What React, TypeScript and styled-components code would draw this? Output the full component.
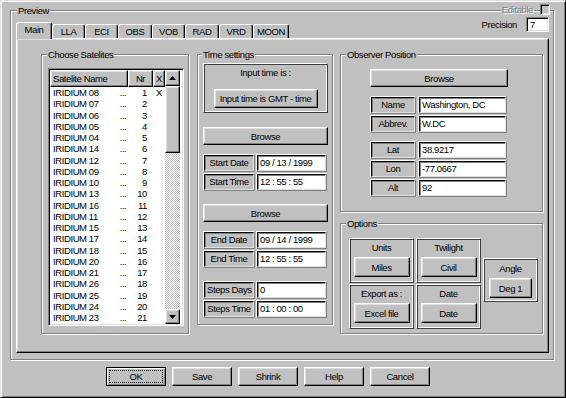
import React from 'react';
import styled, { createGlobalStyle, css } from 'styled-components';

const GlobalStyle = createGlobalStyle`
  html, body {
    margin: 0;
    padding: 0;
    background: #c0c0c0;
  }
  * {
    box-sizing: border-box;
  }
  body {
    font-family: "Liberation Sans", Arial, sans-serif;
    font-size: 9.5px;
    letter-spacing: -0.4px;
    color: #000;
  }
`;

const raised = css`
  border: 1px solid;
  border-color: #fff #000 #000 #fff;
  box-shadow: inset -1px -1px #808080, inset 1px 1px #dfdfdf;
  background: #c0c0c0;
`;

const sunken = css`
  border: 1px solid;
  border-color: #808080 #fff #fff #808080;
  box-shadow: inset 1px 1px #000, inset -1px -1px #dfdfdf;
`;

const Window = styled.div`
  position: relative;
  width: 566px;
  height: 398px;
  background: #c0c0c0;
  border: 1px solid;
  border-color: #dfdfdf #000 #000 #dfdfdf;
  box-shadow: inset 1px 1px #fff, inset -1px -1px #808080;
  padding: 4px 11px 0 9px;
  display: flex;
  flex-direction: column;
`;

interface GroupProps {
  $pt?: number;
  $pr?: number;
  $pb?: number;
  $pl?: number;
}

const Group = styled.fieldset<GroupProps>`
  margin: 0;
  min-width: 0;
  border: 1px solid #808080;
  box-shadow: inset 1px 1px #fff, 1px 1px #fff;
  padding: ${p => `${p.$pt ?? 0}px ${p.$pr ?? 4}px ${p.$pb ?? 6}px ${p.$pl ?? 6}px`};
`;

const Legend = styled.legend<{ $ml?: number }>`
  padding: 0 1px;
  margin-left: ${p => p.$ml ?? -1}px;
  height: 11px;
  line-height: 11px;
  background: #c0c0c0;
`;

const EditableBox = styled.div`
  position: absolute;
  top: 3px;
  right: 15px;
  display: flex;
  align-items: center;
  gap: 6px;
  height: 11px;
`;

const DisabledText = styled.span`
  background: #c0c0c0;
  color: #808080;
  text-shadow: 1px 1px #fff;
  line-height: 11px;
  padding: 0 1px;
`;

const CheckBox = styled.span`
  display: block;
  width: 10px;
  height: 11px;
  background: #c0c0c0;
  ${sunken};
`;

const TopRow = styled.div`
  display: flex;
  justify-content: space-between;
  align-items: flex-end;
  height: 22px;
`;

const TabStrip = styled.div`
  position: relative;
  z-index: 1;
  display: flex;
  align-items: flex-end;
`;

const Tab = styled.div<{ $active?: boolean; $w: number }>`
  width: ${p => p.$w}px;
  height: ${p => (p.$active ? 17 : 14)}px;
  margin-bottom: ${p => (p.$active ? -1 : 0)}px;
  padding-bottom: ${p => (p.$active ? 3 : 0)}px;
  background: #c0c0c0;
  border-top: 1px solid #fff;
  border-left: 1px solid #fff;
  border-right: 1px solid #000;
  border-radius: 3px 3px 0 0;
  box-shadow: inset -1px 0 #808080;
  display: flex;
  align-items: center;
  justify-content: center;
`;

const Precision = styled.div`
  align-self: flex-start;
  margin-top: 1px;
  display: flex;
  align-items: center;
  gap: 9px;
`;

const SmallField = styled.div`
  width: 23px;
  height: 15px;
  background: #fff;
  ${sunken};
  padding: 1px 3px;
  line-height: 11px;
`;

const TabPanel = styled.div`
  height: 315px;
  border: 1px solid;
  border-color: #fff #000 #000 #fff;
  box-shadow: inset -1px -1px #808080, inset 1px 1px #dfdfdf;
  padding: 10px 5px 18px 24px;
  display: flex;
`;

const Column = styled.div<{ $w: number; $ml?: number }>`
  width: ${p => p.$w}px;
  margin-left: ${p => p.$ml ?? 0}px;
  display: flex;
  flex-direction: column;
`;

/* satellite list */

const ListBox = styled.div`
  height: 258px;
  display: flex;
  background: #fff;
  ${sunken};
  padding: 1px;
`;

const ListTable = styled.div`
  width: 115px;
  display: flex;
  flex-direction: column;
  overflow: hidden;
`;

const ListGrid = styled.div`
  display: grid;
  grid-template-columns: 68px 10px 25px 12px;
`;

const HeadCell = styled.div<{ $span?: number; $align?: string }>`
  grid-column: span ${p => p.$span ?? 1};
  height: 17px;
  line-height: 15px;
  padding: 0 2px;
  text-align: ${p => p.$align ?? 'left'};
  ${raised};
`;

const Cell = styled.div<{ $align?: string; $pl?: number; $pr?: number }>`
  height: 11.25px;
  line-height: 11px;
  white-space: nowrap;
  padding-left: ${p => p.$pl ?? 0}px;
  padding-right: ${p => p.$pr ?? 0}px;
  text-align: ${p => p.$align ?? 'left'};
`;

const ScrollBar = styled.div`
  width: 15px;
  display: flex;
  flex-direction: column;
`;

const ScrollButton = styled.div<{ $h: number }>`
  height: ${p => p.$h}px;
  ${raised};
  display: flex;
  align-items: center;
  justify-content: center;
`;

const Track = styled.div`
  flex: 1;
  background: repeating-conic-gradient(#fff 0 25%, #c0c0c0 0 50%) 0 0 / 2px 2px;
`;

/* shared controls */

const Button = styled.div<{ $w?: number; $h?: number }>`
  width: ${p => (p.$w ? `${p.$w}px` : '100%')};
  height: ${p => p.$h ?? 18}px;
  margin: 0 auto;
  ${raised};
  display: flex;
  align-items: center;
  justify-content: center;
`;

const Frame = styled.div<{ $w?: number; $h: number; $pt?: number }>`
  width: ${p => (p.$w ? `${p.$w}px` : '100%')};
  height: ${p => p.$h}px;
  border: 1px solid;
  border-color: #fff #404040 #404040 #fff;
  box-shadow: inset 1px 1px #404040, inset -1px -1px #fff;
  padding: ${p => p.$pt ?? 2}px 3px 0;
`;

const FrameTitle = styled.div<{ $lh?: number; $mb?: number }>`
  text-align: center;
  line-height: ${p => p.$lh ?? 14}px;
  margin-bottom: ${p => p.$mb ?? 2}px;
`;

const Stack = styled.div<{ $mt?: number }>`
  margin-top: ${p => p.$mt ?? 0}px;
  display: flex;
  flex-direction: column;
  gap: 1px;
`;

const Row = styled.div<{ $gap?: number }>`
  display: flex;
  gap: ${p => p.$gap ?? 1}px;
`;

const CellBox = styled.div<{ $w: number }>`
  width: ${p => p.$w}px;
  height: 18px;
  border: 1px solid;
  border-color: #fff #808080 #808080 #fff;
`;

const CellInner = styled.div<{ $field?: boolean }>`
  height: 100%;
  border: 1px solid;
  border-color: #000 #dfdfdf #dfdfdf #000;
  box-shadow: inset 1px 1px #808080;
  background: ${p => (p.$field ? '#fff' : '#c0c0c0')};
  text-align: ${p => (p.$field ? 'left' : 'center')};
  padding: 0 2px;
  line-height: 14px;
  white-space: nowrap;
  overflow: hidden;
`;

const Spaced = styled.div<{ $mt?: number; $ml?: number }>`
  margin-top: ${p => p.$mt ?? 0}px;
  margin-left: ${p => p.$ml ?? 0}px;
`;

const OptionsArea = styled.div`
  margin-left: 2px;
  display: flex;
  align-items: flex-start;
`;

const OptionsGrid = styled.div`
  display: grid;
  grid-template-columns: 65px 65px;
  column-gap: 2px;
  row-gap: 1px;
`;

/* bottom buttons */

const ButtonBar = styled.div`
  margin-top: 7px;
  padding-left: 96px;
  display: flex;
  gap: 6px;
`;

const DialogButton = styled.div<{ $default?: boolean }>`
  width: 60px;
  height: 19px;
  ${raised};
  display: flex;
  align-items: center;
  justify-content: center;
  ${p =>
    p.$default &&
    css`
      border-color: #000;
      box-shadow: inset 1px 1px #fff, inset -1px -1px #808080, inset -2px -2px #c0c0c0;
      padding: 2px;
    `}
`;

const FocusRing = styled.span`
  flex: 1;
  align-self: stretch;
  border: 1px dotted #000;
  display: flex;
  align-items: center;
  justify-content: center;
`;

const Arrow: React.FC<{ down?: boolean }> = ({ down }) => (
  <svg width="7" height="4" viewBox="0 0 7 4">
    <polygon points={down ? '0,0 7,0 3.5,4' : '3.5,0 7,4 0,4'} fill="#000" />
  </svg>
);

const satellites: [string, number][] = [
  ['IRIDIUM 08', 1], ['IRIDIUM 07', 2], ['IRIDIUM 06', 3], ['IRIDIUM 05', 4],
  ['IRIDIUM 04', 5], ['IRIDIUM 14', 6], ['IRIDIUM 12', 7], ['IRIDIUM 09', 8],
  ['IRIDIUM 10', 9], ['IRIDIUM 13', 10], ['IRIDIUM 16', 11], ['IRIDIUM 11', 12],
  ['IRIDIUM 15', 13], ['IRIDIUM 17', 14], ['IRIDIUM 18', 15], ['IRIDIUM 20', 16],
  ['IRIDIUM 21', 17], ['IRIDIUM 26', 18], ['IRIDIUM 25', 19], ['IRIDIUM 24', 20],
  ['IRIDIUM 23', 21], ['IRIDIUM 22', 22],
];

const tabs: [string, number][] = [
  ['Main', 36], ['LLA', 33], ['ECI', 33], ['OBS', 34],
  ['VOB', 33], ['RAD', 34], ['VRD', 34], ['MOON', 36],
];

const LabeledField: React.FC<{ label: string; value: string; lw: number; fw: number; gap?: number }> = ({
  label, value, lw, fw, gap,
}) => (
  <Row $gap={gap}>
    <CellBox $w={lw}><CellInner>{label}</CellInner></CellBox>
    <CellBox $w={fw}><CellInner $field>{value}</CellInner></CellBox>
  </Row>
);

const OptionBox: React.FC<{ title: string; value: string; w?: number; bw?: number }> = ({ title, value, w, bw }) => (
  <Frame $w={w ?? 65} $h={45}>
    <FrameTitle>{title}</FrameTitle>
    <Button $w={bw ?? 56} $h={20}>{value}</Button>
  </Frame>
);

const App: React.FC = () => {
  return (
    <>
      <GlobalStyle />
      <Window>
        <EditableBox>
          <DisabledText>Editable</DisabledText>
          <CheckBox />
        </EditableBox>

        <Group $pl={5} $pr={4} $pb={6}>
          <Legend $ml={1}>Preview</Legend>
          <TopRow>
            <TabStrip>
              {tabs.map(([name, w], i) => (
                <Tab key={name} $w={w} $active={i === 0}>{name}</Tab>
              ))}
            </TabStrip>
            <Precision>
              <span>Precision</span>
              <SmallField>7</SmallField>
            </Precision>
          </TopRow>

          <TabPanel>
            <Column $w={148}>
              <Group $pt={8} $pb={7}>
                <Legend>Choose Satelites</Legend>
                <ListBox>
                  <ListTable>
                    <ListGrid>
                      <HeadCell $span={2}>Satelite Name</HeadCell>
                      <HeadCell $align="center">Nr</HeadCell>
                      <HeadCell $align="center">X</HeadCell>
                      {satellites.map(([name, nr], i) => (
                        <React.Fragment key={name}>
                          <Cell $pl={3}>{name}</Cell>
                          <Cell $align="center">...</Cell>
                          <Cell $align="right" $pr={6}>{nr}</Cell>
                          <Cell $align="center">{i === 0 ? 'X' : ''}</Cell>
                        </React.Fragment>
                      ))}
                    </ListGrid>
                  </ListTable>
                  <ScrollBar>
                    <ScrollButton $h={16}><Arrow /></ScrollButton>
                    <ScrollButton $h={67} />
                    <Track />
                    <ScrollButton $h={15}><Arrow down /></ScrollButton>
                  </ScrollBar>
                </ListBox>
              </Group>
            </Column>

            <Column $w={136} $ml={8}>
              <Group $pt={3} $pl={5}>
                <Legend>Time settings</Legend>
                <Frame $h={50} $pt={3}>
                  <FrameTitle $lh={12} $mb={10}>Input time is :</FrameTitle>
                  <Button $w={104} $h={19}>Input time is GMT - time</Button>
                </Frame>
                <Spaced $mt={14}>
                  <Button>Browse</Button>
                </Spaced>
                <Stack $mt={9}>
                  <LabeledField label="Start Date" value="09 / 13 / 1999" lw={52} fw={71} />
                  <LabeledField label="Start Time" value="12 : 55 : 55" lw={52} fw={71} />
                </Stack>
                <Spaced $mt={13}>
                  <Button>Browse</Button>
                </Spaced>
                <Stack $mt={9}>
                  <LabeledField label="End Date" value="09 / 14 / 1999" lw={52} fw={71} />
                  <LabeledField label="End Time" value="12 : 55 : 55" lw={52} fw={71} />
                </Stack>
                <Stack $mt={13}>
                  <LabeledField label="Steps Days" value="0" lw={52} fw={71} />
                  <LabeledField label="Steps Time" value="01 : 00 : 00" lw={52} fw={71} />
                </Stack>
              </Group>
            </Column>

            <Column $w={203} $ml={7}>
              <Group $pt={9} $pb={14}>
                <Legend>Observer Position</Legend>
                <Spaced $ml={23} style={{ width: 138 }}>
                  <Button>Browse</Button>
                  <Stack $mt={9}>
                    <LabeledField label="Name" value="Washington, DC" lw={46} fw={89} gap={2} />
                    <LabeledField label="Abbrev." value="W.DC" lw={46} fw={89} gap={2} />
                  </Stack>
                  <Stack $mt={8}>
                    <LabeledField label="Lat" value="38.9217" lw={46} fw={89} gap={2} />
                    <LabeledField label="Lon" value="-77.0667" lw={46} fw={89} gap={2} />
                    <LabeledField label="Alt" value="92" lw={46} fw={89} gap={2} />
                  </Stack>
                </Spaced>
              </Group>
              <Spaced $mt={6} style={{ flex: 1, display: 'flex' }}>
                <Group $pt={9} $pb={4} style={{ flex: 1 }}>
                  <Legend>Options</Legend>
                  <OptionsArea>
                    <OptionsGrid>
                      <OptionBox title="Units" value="Miles" />
                      <OptionBox title="Twilight" value="Civil" />
                      <OptionBox title="Export as :" value="Excel file" />
                      <OptionBox title="Date" value="Date" />
                    </OptionsGrid>
                    <Spaced $mt={20} $ml={2}>
                      <Frame $w={55} $h={44}>
                        <FrameTitle $lh={15} $mb={2}>Angle</FrameTitle>
                        <Button $w={43} $h={20}>Deg 1</Button>
                      </Frame>
                    </Spaced>
                  </OptionsArea>
                </Group>
              </Spaced>
            </Column>
          </TabPanel>
        </Group>

        <ButtonBar>
          <DialogButton $default><FocusRing>OK</FocusRing></DialogButton>
          <DialogButton>Save</DialogButton>
          <DialogButton>Shrink</DialogButton>
          <DialogButton>Help</DialogButton>
          <DialogButton>Cancel</DialogButton>
        </ButtonBar>
      </Window>
    </>
  );
};

export default App;
